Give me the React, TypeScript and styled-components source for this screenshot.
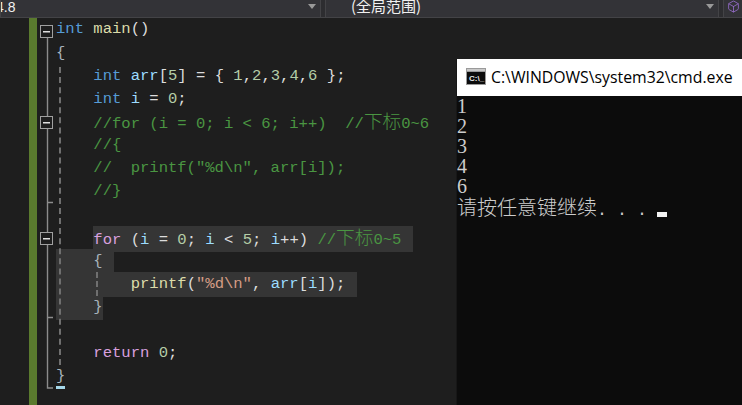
import React, { FunctionComponent } from 'react';
import styled, { createGlobalStyle } from 'styled-components';
import { Box } from 'lucide-react';

const GlobalStyle = createGlobalStyle`
  html, body {
    margin: 0;
    padding: 0;
    background: #1e1e1e;
  }
`;

const LINE = 23.13;
const CODE_FONT = `"Liberation Mono", "Noto Sans CJK SC", monospace`;

const Page = styled.div`
    position: relative;
    width: 742px;
    height: 405px;
    overflow: hidden;
    display: flex;
    flex-direction: column;
    background: #1e1e1e;
  `,
  Toolbar = styled.div`
    height: 17px;
    flex: none;
    display: flex;
    gap: 4px;
    background: #2d2d30;
    border-bottom: 1px solid #434346;
    color: #f1f1f1;
    font: 15px "Noto Sans CJK SC", "Liberation Sans", sans-serif;
    line-height: 11px;
  `,
  Dropdown = styled.div<{ $width: number; $indent: number }>`
    position: relative;
    width: ${props => props.$width}px;
    box-sizing: border-box;
    flex: none;
    overflow: hidden;
    padding-left: ${props => props.$indent}px;
    background: #333337;
    border-right: 1px solid #434346;
    border-left: 1px solid #434346;
    white-space: nowrap;
  `,
  Arrow = styled.i`
    position: absolute;
    right: 4px;
    top: 4px;
    width: 0;
    height: 0;
    border-left: 4px solid transparent;
    border-right: 4px solid transparent;
    border-top: 5px solid #999999;
  `,
  IconSlot = styled.div`
    flex: 1;
    display: flex;
    justify-content: center;
    background: #333337;
    border-left: 1px solid #434346;
    overflow: hidden;
    color: #9a6fd0;
  `,
  VersionText = styled.span`
    display: inline-block;
    margin-left: -5px;
    font: 14px/11px "Liberation Sans", sans-serif;
  `,
  Editor = styled.div`
    flex: 1;
    display: flex;
    min-height: 0;
  `,
  Margin = styled.div`
    width: 29px;
    flex: none;
  `,
  ChangeBar = styled.div`
    width: 8px;
    flex: none;
    background: #5a7a2e;
  `,
  FoldColumn = styled.svg`
    width: 19px;
    height: 387px;
    flex: none;
  `,
  Code = styled.div`
    flex: 1;
    padding-top: 0.4px;
    font: 15.55px ${CODE_FONT};
    color: #dcdcdc;
  `,
  Line = styled.div<{ $hlLeft?: number; $hlRight?: number; $hlTop?: number; $hlBottom?: number }>`
    position: relative;
    height: ${LINE}px;
    line-height: ${LINE}px;
    white-space: pre;
    ${props =>
      props.$hlRight !== undefined
        ? `&::before {
      content: '';
      position: absolute;
      left: ${props.$hlLeft}px;
      width: ${props.$hlRight - (props.$hlLeft as number)}px;
      top: ${props.$hlTop}px;
      bottom: ${props.$hlBottom}px;
      background: #353535;
    }`
        : ''}
  `,
  LineText = styled.span`
    position: relative;
  `,
  Cjk = styled.span`
    font-family: "Noto Sans CJK SC", sans-serif;
    font-size: 18.67px;
    font-weight: 300;
    line-height: 1;
  `,
  Keyword = styled.span`
    color: #569cd6;
  `,
  Control = styled.span`
    color: #d8a0df;
  `,
  Func = styled.span`
    color: #dcdcaa;
  `,
  Variable = styled.span`
    color: #9cdcfe;
  `,
  Num = styled.span`
    color: #b5cea8;
  `,
  Str = styled.span`
    color: #d69d85;
  `,
  Comment = styled.span`
    color: #4a9642;
  `,
  Brace = styled.span`
    color: #a8b4bc;
  `,
  Guide = styled.div<{ $x: number; $top: number; $height: number }>`
    position: absolute;
    left: ${props => props.$x}px;
    top: ${props => props.$top}px;
    height: ${props => props.$height}px;
    border-left: 2px dashed #6f6f6f;
  `,
  Caret = styled.div`
    position: absolute;
    left: 56px;
    top: 386px;
    width: 9px;
    height: 3px;
    background: #a6d8ea;
  `,
  ConsoleWindow = styled.div`
    position: absolute;
    left: 457px;
    top: 59px;
    right: 0;
    bottom: 0;
    display: flex;
    flex-direction: column;
    background: #0c0c0c;
    box-shadow: -1px 0 0 #171717;
  `,
  TitleBar = styled.div`
    height: 37px;
    flex: none;
    box-sizing: border-box;
    padding: 0 0 2px 9px;
    display: flex;
    align-items: center;
    gap: 5px;
    background: #ffffff;
    color: #000000;
    font: 15.8px "Open Sans", "Liberation Sans", sans-serif;
    white-space: nowrap;
  `,
  ConsoleBody = styled.div`
    padding-top: 1px;
    color: #cccccc;
    font: 16.67px "Liberation Mono", monospace;
  `,
  ConsoleLine = styled.div`
    height: 20px;
    line-height: 20px;
    white-space: pre;
  `,
  ConsoleDigit = styled.span`
    position: relative;
    top: -1px;
    font-family: "Liberation Serif", serif;
    font-size: 20px;
  `,
  ConsoleCjk = styled.span`
    font-family: "Noto Sans CJK SC", sans-serif;
    font-size: 20px;
    font-weight: 300;
    line-height: 1;
  `,
  Cursor = styled.span`
    display: inline-block;
    width: 10px;
    height: 5px;
    vertical-align: -2px;
    background: #f2f2f2;
  `;

const FoldBox: FunctionComponent<{ y: number }> = ({ y }) => (
  <g>
    <rect x={3.5} y={y + 0.5} width={12} height={12} fill="#1e1e1e" stroke="#a0a0a0" />
    <rect x={6} y={y + 6} width={7} height={1.5} fill="#e0e0e0" />
  </g>
);

const FoldMargin: FunctionComponent = () => (
  <FoldColumn viewBox="0 0 19 387">
    <path
      d="M10.5 20V98M10.5 111V215M10.5 227V370H16M10.5 184.5H16M10.5 299.5H16"
      fill="none"
      stroke="#8c8c8c"
      strokeWidth="1.4"
    />
    <FoldBox y={7} />
    <FoldBox y={98} />
    <FoldBox y={214} />
  </FoldColumn>
);

const CmdIcon: FunctionComponent = () => (
  <svg width="20" height="17" viewBox="0 0 20 17">
    <rect width="20" height="17" fill="#9a9a9a" />
    <rect x="1" y="1" width="18" height="2" fill="#c8c8c8" />
    <rect x="1" y="4" width="18" height="12" fill="#0c0c0c" />
    <text x="3" y="13" fontSize="8" fontWeight="bold" fontFamily="Liberation Sans" fill="#e8e8e8">
      C:\_
    </text>
  </svg>
);

const App: FunctionComponent = () => {
  return (
    <Page>
      <GlobalStyle />
      <Toolbar>
        <Dropdown $width={321} $indent={0}>
          <VersionText>4.8</VersionText>
          <Arrow />
        </Dropdown>
        <Dropdown $width={394} $indent={25}>
          (全局范围)
          <Arrow />
        </Dropdown>
        <IconSlot>
          <Box size={13} strokeWidth={1.5} />
        </IconSlot>
      </Toolbar>
      <Editor>
        <Margin />
        <ChangeBar />
        <FoldMargin />
        <Code>
          <Line>
            <Keyword>int</Keyword> <Func>main</Func>()
          </Line>
          <Line>
            <Brace>{'{'}</Brace>
          </Line>
          <Line>
            {'    '}
            <Keyword>int</Keyword> <Variable>arr</Variable>[<Num>5</Num>] = {'{ '}
            <Num>1</Num>,<Num>2</Num>,<Num>3</Num>,<Num>4</Num>,<Num>6</Num> {'};'}
          </Line>
          <Line>
            {'    '}
            <Keyword>int</Keyword> <Variable>i</Variable> = <Num>0</Num>;
          </Line>
          <Line>
            <Comment>
              {'    //for (i = 0; i < 6; i++)  //'}
              <Cjk>下标</Cjk>0~6
            </Comment>
          </Line>
          <Line>
            <Comment>{'    //{'}</Comment>
          </Line>
          <Line>
            <Comment>{'    //  printf("%d\\n", arr[i]);'}</Comment>
          </Line>
          <Line>
            <Comment>{'    //}'}</Comment>
          </Line>
          <Line />
          <Line $hlLeft={37} $hlRight={357} $hlTop={-1} $hlBottom={-2}>
            <LineText>
              {'    '}
              <Control>for</Control> (<Variable>i</Variable> = <Num>0</Num>; <Variable>i</Variable> {'<'} <Num>5</Num>;{' '}
              <Variable>i</Variable>++) <Comment>//<Cjk>下标</Cjk>0~5</Comment>
            </LineText>
          </Line>
          <Line $hlLeft={0} $hlRight={58} $hlTop={-1} $hlBottom={1}>
            <LineText>
              {'    '}
              <Brace>{'{'}</Brace>
            </LineText>
          </Line>
          <Line $hlLeft={0} $hlRight={301} $hlTop={-1} $hlBottom={-1}>
            <LineText>
              {'        '}
              <Func>printf</Func>(<Str>"%d\n"</Str>, <Variable>arr</Variable>[<Variable>i</Variable>]);
            </LineText>
          </Line>
          <Line $hlLeft={0} $hlRight={47} $hlTop={0} $hlBottom={-1}>
            <LineText>
              {'    '}
              <Brace>{'}'}</Brace>
            </LineText>
          </Line>
          <Line />
          <Line>
            {'    '}
            <Control>return</Control> <Num>0</Num>;
          </Line>
          <Line>
            <Brace>{'}'}</Brace>
          </Line>
        </Code>
      </Editor>
      <Guide $x={59} $top={67} $height={298} />
      <Guide $x={96} $top={272} $height={24} />
      <Caret />
      <ConsoleWindow>
        <TitleBar>
          <CmdIcon />
          C:\WINDOWS\system32\cmd.exe
        </TitleBar>
        <ConsoleBody>
          {['1', '2', '3', '4', '6'].map(digit => (
            <ConsoleLine key={digit}>
              <ConsoleDigit>{digit}</ConsoleDigit>
            </ConsoleLine>
          ))}
          <ConsoleLine>
            <ConsoleCjk>请按任意键继续</ConsoleCjk>. . . <Cursor />
          </ConsoleLine>
        </ConsoleBody>
      </ConsoleWindow>
    </Page>
  );
};

export default App;
